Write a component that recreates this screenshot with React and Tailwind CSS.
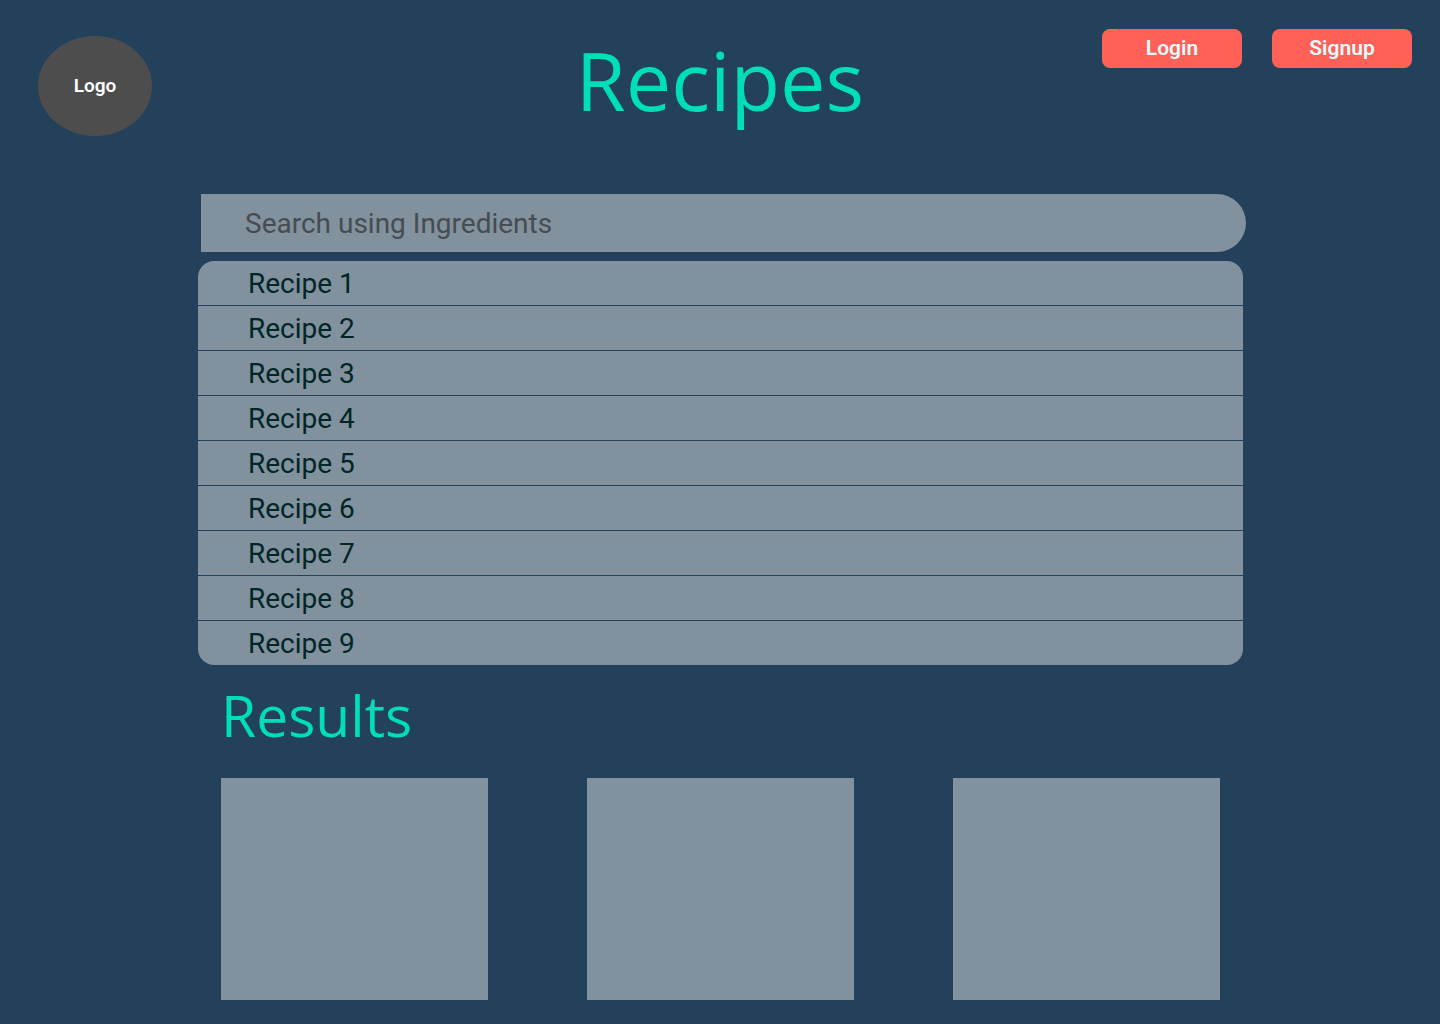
import React from "react";

const recipes = [1, 2, 3, 4, 5, 6, 7, 8, 9].map((n) => `Recipe ${n}`);

function HeaderButton({ children }) {
  return (
    <button
      type="button"
      className="h-[39px] w-[140px] rounded-lg bg-[#ff6057] text-[21px] font-semibold text-[#e0fbfc]"
    >
      {children}
    </button>
  );
}

function Header() {
  return (
    <header className="grid h-[194px] grid-cols-[1fr_auto_1fr] items-start px-7">
      <a
        href="#"
        className="mt-9 ml-[10px] flex h-[100px] w-[114px] items-center justify-center rounded-[50%] bg-[#4d4d4d] text-[19px] font-semibold text-white"
      >
        Logo
      </a>
      <h1 className="mt-6 font-['Open_Sans',sans-serif] text-[81px] leading-[112px] text-[#00deb6]">
        Recipes
      </h1>
      <div className="mt-[29px] flex justify-end gap-[30px]">
        <HeaderButton>Login</HeaderButton>
        <HeaderButton>Signup</HeaderButton>
      </div>
    </header>
  );
}

export default function App() {
  return (
    <div className="min-h-screen bg-[#24415b] font-[Roboto,sans-serif]">
      <Header />
      <main className="pr-[194px] pb-6 pl-[198px]">
        <form className="pl-[3px]">
          <input
            type="search"
            aria-label="Search using Ingredients"
            placeholder="Search using Ingredients"
            className="block h-[58px] w-full appearance-none rounded-r-full bg-[#81919d] px-11 text-[28px] text-[#002626] outline-none placeholder:text-[#464c51]"
          />
        </form>
        <ul className="mt-[9px] mr-[3px] divide-y divide-[#24415b] overflow-hidden rounded-2xl bg-[#81919d]">
          {recipes.map((name) => (
            <li key={name}>
              <a
                href="#"
                className="block h-11 pl-[50px] text-[28px] leading-[46px] text-[#002626]"
              >
                {name}
              </a>
            </li>
          ))}
        </ul>
        <section className="mr-[3px] px-[23px]">
          <h2 className="mt-3 font-['Open_Sans',sans-serif] text-[57px] leading-[76px] text-[#00deb6]">
            Results
          </h2>
          <div className="mt-[25px] grid grid-cols-3 gap-[99px]">
            <article className="aspect-[267/222] bg-[#81919d]" />
            <article className="aspect-[267/222] bg-[#81919d]" />
            <article className="aspect-[267/222] bg-[#81919d]" />
          </div>
        </section>
      </main>
    </div>
  );
}
